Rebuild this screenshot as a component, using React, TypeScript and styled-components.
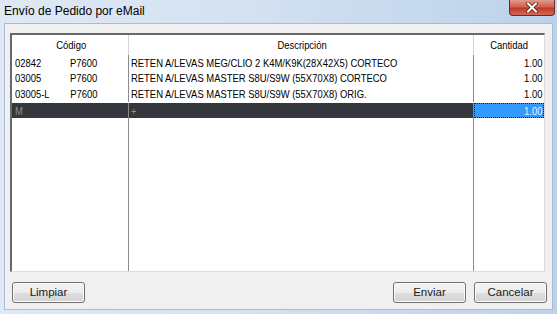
import React from "react";
import styled, { createGlobalStyle } from "styled-components";

const GlobalStyle = createGlobalStyle`
  html, body {
    margin: 0;
    padding: 0;
  }
  body {
    width: 557px;
    height: 314px;
    overflow: hidden;
    background: #c9dbef;
    font-family: "Liberation Sans", Arial, sans-serif;
  }
`;

const Window = styled.div`
  width: 557px;
  height: 314px;
  box-sizing: border-box;
  display: flex;
  flex-direction: column;
  padding: 0 4px 4px 4px;
  background: linear-gradient(to right, #dfe9f5 0%, #d3e1f1 45%, #bcd2ea 100%);
`;

const TitleBar = styled.div`
  height: 23px;
  flex: none;
  display: flex;
  align-items: flex-start;
`;

const Title = styled.span`
  margin-top: 4px;
  font-size: 12px;
  color: #000;
`;

const CloseButton = styled.div`
  margin-left: auto;
  margin-right: -2px;
  width: 46px;
  height: 16px;
  box-sizing: border-box;
  border: 1px solid #6e2a22;
  border-top: none;
  border-radius: 0 0 4px 4px;
  background: linear-gradient(to bottom, #e49a8a 0%, #d0604e 45%, #c23a2c 55%, #d46852 100%);
  display: flex;
  align-items: center;
  justify-content: center;
`;

const Client = styled.div`
  flex: 1;
  display: flex;
  flex-direction: column;
  background: #f0f0f0;
  border: 1px solid #a9bcd3;
  box-sizing: border-box;
`;

const Grid = styled.div`
  margin: 9px 7px 0 5px;
  height: 239px;
  box-sizing: border-box;
  display: flex;
  flex-direction: column;
  background: #fff;
  border-style: solid;
  border-width: 2px 1px 1px 2px;
  border-color: #696969 #dcdcdc #dcdcdc #696969;
  font-size: 11.5px;
  color: #000;
`;

const Row = styled.div<{ $height?: string; $dark?: boolean; $gap?: number }>`
  display: flex;
  flex: ${(p) => (p.$height ? `0 0 ${p.$height}` : "1")};
  margin-top: ${(p) => p.$gap ?? 0}px;
  background: ${(p) => (p.$dark ? "#34373c" : "transparent")};
  color: ${(p) => (p.$dark ? "#8e8e8e" : "#000")};
`;

const Cell = styled.div<{ $col: number; $header?: boolean; $align?: string; $selected?: boolean }>`
  box-sizing: border-box;
  display: flex;
  align-items: center;
  white-space: pre;
  overflow: hidden;
  width: ${(p) => [117, 345, 70][p.$col]}px;
  justify-content: ${(p) => p.$align ?? "flex-start"};
  padding: 0 ${(p) => (p.$col === 2 ? 2 : 0)}px 0 ${(p) => (p.$col === 0 ? 3 : 2)}px;
  border-right: ${(p) =>
    p.$col === 2 ? "none" : p.$header ? "1px solid #d6d6d6" : "1px solid #8a8a8a"};
  ${(p) =>
    p.$selected &&
    `
    background: #3399ff;
    color: #e6f2ff;
    outline: 1px dotted #1a1a1a;
    outline-offset: -1px;
  `}
`;

// the grid font is drawn narrow in the original dialog
const Text = styled.span<{ $origin?: string }>`
  display: inline-block;
  transform: scaleX(0.82);
  transform-origin: ${(p) => p.$origin ?? "left"} center;
`;

const Footer = styled.div`
  display: flex;
  align-items: center;
  padding: 10px 5px 0 7px;
  gap: 8px;
`;

const Spacer = styled.div`
  flex: 1;
`;

const Button = styled.button`
  width: 73px;
  height: 21px;
  box-sizing: border-box;
  border: 1px solid #707070;
  border-radius: 3px;
  background: linear-gradient(to bottom, #f4f4f4 0%, #ececec 50%, #dfdfdf 51%, #d2d2d2 100%);
  box-shadow: inset 0 0 0 1px #fcfcfc;
  font-family: "Liberation Sans", Arial, sans-serif;
  font-size: 11.5px;
  font-weight: 400;
  color: #1a1a1a;
  padding: 0 0 1px 0;
`;

const items = [
  { code: "02842           P7600", desc: "RETEN A/LEVAS MEG/CLIO 2 K4M/K9K(28X42X5) CORTECO", qty: "1.00" },
  { code: "03005           P7600", desc: "RETEN A/LEVAS MASTER S8U/S9W (55X70X8) CORTECO", qty: "1.00" },
  { code: "03005-L        P7600", desc: "RETEN A/LEVAS MASTER S8U/S9W (55X70X8) ORIG.", qty: "1.00" },
];

const App: React.FC = () => {
  return (
    <>
      <GlobalStyle />
      <Window>
        <TitleBar>
          <Title>Envío de Pedido por eMail</Title>
          <CloseButton>
            <svg width="14" height="11" viewBox="0 0 14 11">
              <path
                d="M3 1.5 L11 9.5 M11 1.5 L3 9.5"
                stroke="#5a1d16"
                strokeWidth="3.6"
                strokeLinecap="square"
              />
              <path
                d="M3 1.5 L11 9.5 M11 1.5 L3 9.5"
                stroke="#ffffff"
                strokeWidth="2"
                strokeLinecap="square"
              />
            </svg>
          </CloseButton>
        </TitleBar>
        <Client>
          <Grid>
            <Row $height="20px">
              <Cell $col={0} $header $align="center"><Text $origin="center">Código</Text></Cell>
              <Cell $col={1} $header $align="center"><Text $origin="center">Descripción</Text></Cell>
              <Cell $col={2} $header $align="center"><Text $origin="center">Cantidad</Text></Cell>
            </Row>
            {items.map((it) => (
              <Row key={it.code} $height="15.5px">
                <Cell $col={0}><Text>{it.code}</Text></Cell>
                <Cell $col={1}><Text>{it.desc}</Text></Cell>
                <Cell $col={2} $align="flex-end"><Text $origin="right">{it.qty}</Text></Cell>
              </Row>
            ))}
            <Row $height="15px" $dark $gap={1.5}>
              <Cell $col={0}><Text>M</Text></Cell>
              <Cell $col={1}><Text>+</Text></Cell>
              <Cell $col={2} $align="flex-end" $selected><Text $origin="right">1.00</Text></Cell>
            </Row>
            <Row>
              <Cell $col={0} />
              <Cell $col={1} />
              <Cell $col={2} />
            </Row>
          </Grid>
          <Footer>
            <Button>Limpiar</Button>
            <Spacer />
            <Button>Enviar</Button>
            <Button>Cancelar</Button>
          </Footer>
        </Client>
      </Window>
    </>
  );
};

export default App;
